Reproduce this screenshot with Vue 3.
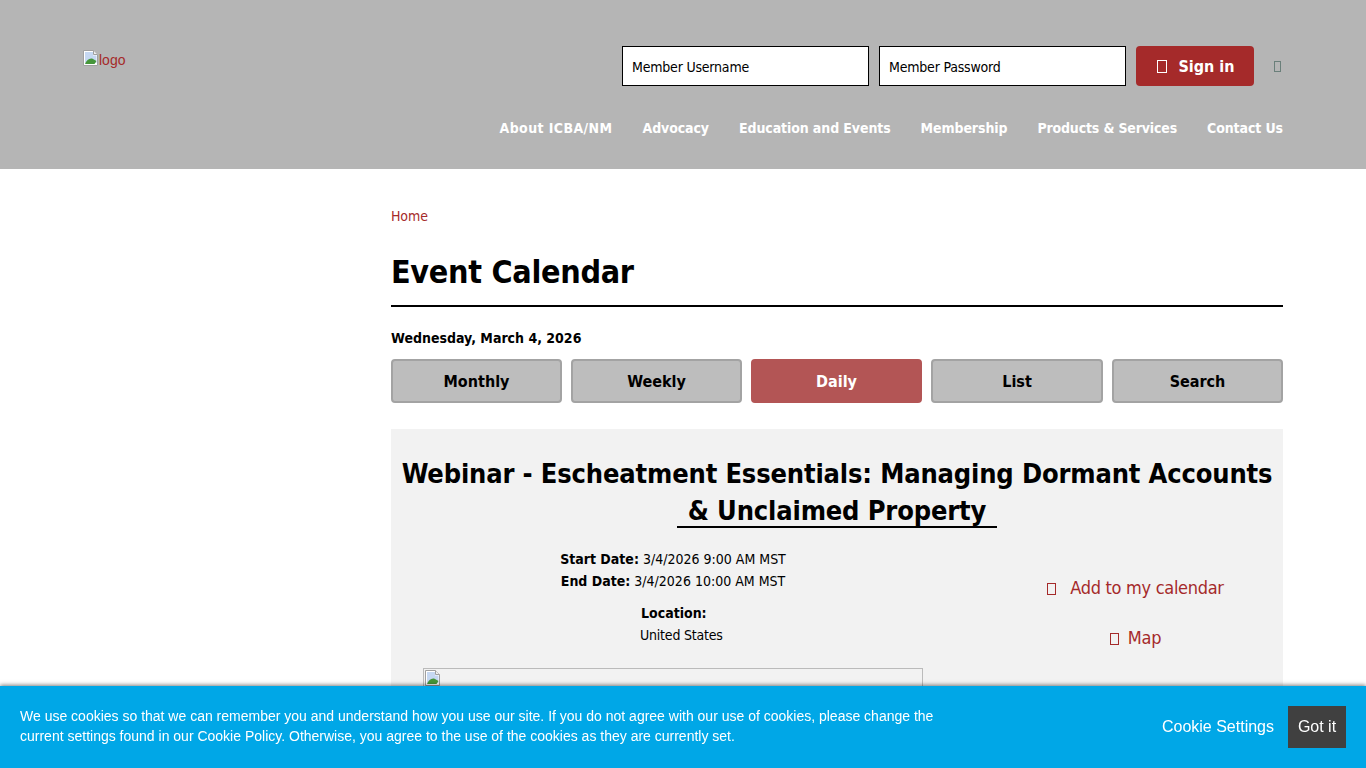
<script setup>
const nav = ['About ICBA/NM', 'Advocacy', 'Education and Events', 'Membership', 'Products & Services', 'Contact Us']
const tabs = ['Monthly', 'Weekly', 'Daily', 'List', 'Search']
</script>

<template>
  <div class="page">
    <header class="header">
      <a class="logo" href="#">
        <svg class="broken" width="16" height="16" viewBox="0 0 16 16"><path d="M.5.5h10l4 4v11H.5z" fill="#fff" stroke="#a0a0a0"/><path d="M2 2h8v3.500h3.500V13H2z" fill="#c6d8f2"/><path d="M2 14c1.500-4 5-6.500 8-5l3.500 2-2 3z" fill="#46963a"/><path d="M10.500.5v4h4" fill="#eee" stroke="#a0a0a0"/></svg>logo
      </a>
      <div class="header-right">
        <form class="login" @submit.prevent>
          <div class="field">Member Username</div>
          <div class="field">Member Password</div>
          <button class="signin"><span class="tofu tofu-w"></span>Sign in</button>
          <span class="tofu tofu-g"></span>
        </form>
        <nav class="nav">
          <a v-for="n in nav" :key="n" href="#">{{ n }}</a>
        </nav>
      </div>
    </header>

    <main class="main">
      <div class="content">
        <a class="crumb" href="#">Home</a>
        <h1 class="title">Event Calendar</h1>
        <div class="date">Wednesday, March 4, 2026</div>
        <div class="tabs">
          <a v-for="t in tabs" :key="t" href="#" class="tab" :class="{ active: t === 'Daily' }">{{ t }}</a>
        </div>
        <section class="panel">
          <h2 class="event">Webinar - Escheatment Essentials: Managing Dormant Accounts<br><span class="event-u">&amp; Unclaimed Property</span></h2>
          <div class="cols">
            <div class="info">
              <div class="dates">
                <div><b>Start Date:</b> 3/4/2026 9:00 AM MST</div>
                <div><b>End Date:</b> 3/4/2026 10:00 AM MST</div>
              </div>
              <div class="loc">
                <div class="loc-label"><b>Location:</b></div>
                <div class="loc-value">United States</div>
              </div>
              <div class="imgbox">
                <svg class="broken" width="16" height="16" viewBox="0 0 16 16"><path d="M.5.5h10l4 4v11H.5z" fill="#fff" stroke="#a0a0a0"/><path d="M2 2h8v3.500h3.500V13H2z" fill="#c6d8f2"/><path d="M2 14c1.500-4 5-6.500 8-5l3.500 2-2 3z" fill="#46963a"/><path d="M10.500.5v4h4" fill="#eee" stroke="#a0a0a0"/></svg>
              </div>
            </div>
            <div class="actions">
              <a href="#"><span class="tofu tofu-r"></span>Add to my calendar</a>
              <a href="#"><span class="tofu tofu-r small"></span>Map</a>
            </div>
          </div>
        </section>
      </div>
    </main>

    <aside class="cookie">
      <p>We use cookies so that we can remember you and understand how you use our site. If you do not agree with our use of cookies, please change the current settings found in our Cookie Policy. Otherwise, you agree to the use of the cookies as they are currently set.</p>
      <div class="cookie-actions">
        <a href="#">Cookie Settings</a>
        <button>Got it</button>
      </div>
    </aside>
  </div>
</template>

<style>
html, body { margin: 0; overflow: hidden; }
</style>

<style scoped>
.page {
  height: 768px;
  overflow: hidden;
  background: #fff;
  color: #000;
  font-family: "DejaVu Sans", Verdana, sans-serif;
  font-stretch: condensed;
  font-size: 14px;
}
a { color: #a52a2a; text-decoration: none; }
.header {
  height: 169px;
  box-sizing: border-box;
  background: #b5b5b5;
  padding: 46px 83px 0;
  display: flex;
  justify-content: space-between;
}
.logo { display: flex; align-items: flex-start; height: 24px; padding-top: 4px; line-height: 21px; font-family: "Liberation Sans", sans-serif; font-stretch: normal; }
.broken { flex: none; }
.header-right { display: flex; flex-direction: column; align-items: flex-end; }
.login { display: flex; align-items: center; margin: 0; }
.field {
  width: 247px;
  height: 40px;
  box-sizing: border-box;
  border: 1px solid #000;
  background: #fff;
  margin-right: 10px;
  padding-left: 9px;
  line-height: 40px;
  font-size: 14px;
  letter-spacing: -.2px;
}
.signin {
  width: 118px;
  height: 40px;
  margin-right: 20px;
  padding: 0 0 0 2px;
  border: 0;
  border-radius: 4px;
  background: #a52a2a;
  color: #fff;
  font: inherit;
  font-stretch: inherit;
  font-size: 16px;
  font-weight: 700;
  display: flex;
  align-items: center;
  justify-content: center;
}
.tofu { display: inline-block; box-sizing: border-box; border: 1px solid currentColor; flex: none; }
.tofu-w { width: 10px; height: 13px; margin-right: 11px; color: #fff; }
.tofu-g { width: 7px; height: 11px; color: #6a7f7a; margin-right: 2px; }
.tofu-r { width: 9px; height: 12px; margin-right: 14px; vertical-align: -1px; }
.tofu-r.small { margin-right: 9px; }
.nav { display: flex; gap: 30px; margin-top: 33px; }
.nav a { color: #fff; font-weight: 700; font-size: 14px; line-height: 18px; letter-spacing: -.1px; }
.nav a:first-child { letter-spacing: .4px; }
.nav a:nth-child(5) { letter-spacing: -.16px; }
.main { display: flex; justify-content: flex-end; padding: 0 83px 0 0; }
.content { width: 892px; }
.crumb { display: block; margin-top: 39px; line-height: 17px; font-size: 14px; letter-spacing: -.1px; }
.title {
  margin: 28px 0 0;
  padding-bottom: 13px;
  border-bottom: 2px solid #000;
  font-size: 32px;
  line-height: 39px;
  font-weight: 700;
  letter-spacing: -.3px;
}
.date { margin-top: 22px; font-weight: 700; font-size: 14px; line-height: 18px; }
.tabs { display: grid; grid-template-columns: 171px 171px 171px 172px 171px; gap: 9px; margin-top: 12px; }
.tab {
  height: 44px;
  box-sizing: border-box;
  border: 2px solid #a3a3a3;
  border-radius: 4px;
  background: #bdbdbd;
  color: #000;
  text-align: center;
  font-size: 16px;
  font-weight: 700;
  line-height: 42px;
}
.tab.active { background: #b35555; border-color: #b35555; color: #fff; }
.panel { margin-top: 26px; background: #f2f2f2; height: 340px; padding-top: 26px; box-sizing: border-box; }
.event { margin: 0; text-align: center; font-size: 27px; line-height: 37px; font-weight: 700; letter-spacing: -.15px; }
.event-u { display: inline-block; padding: 0 11px; border-bottom: 2px solid #000; line-height: 30px; }
.cols { display: flex; margin-top: 19px; }
.info { width: 564px; padding-left: 32px; box-sizing: border-box; flex: none; }
.dates { width: 500px; text-align: center; line-height: 22px; }
.loc { margin-top: 10px; padding-left: 217px; line-height: 22px; }
.loc-label { padding-left: 1px; }
.loc-value { letter-spacing: -.2px; }
.imgbox { width: 500px; height: 100px; margin-top: 22px; box-sizing: border-box; border: 1px solid #bbb; padding: 1px; }
.imgbox .broken { display: block; }
.actions { flex: 1; display: flex; flex-direction: column; align-items: center; padding-top: 28px; padding-left: 33px; gap: 26px; font-size: 18px; line-height: 24px; letter-spacing: -.3px; }
.actions a { display: block; }
.cookie {
  position: fixed;
  left: 0;
  right: 0;
  bottom: 0;
  height: 82px;
  box-sizing: border-box;
  background: #00a7e7;
  box-shadow: 0 -1px 4px rgba(0, 0, 0, .5);
  padding: 20px 20px 0;
  display: flex;
  justify-content: space-between;
  color: #fff;
  font-family: "Liberation Sans", Arial, sans-serif;
  font-stretch: normal;
}
.cookie p { margin: 0; width: 930px; line-height: 20px; font-size: 14px; }
.cookie-actions { display: flex; align-items: center; height: 42px; gap: 14px; }
.cookie-actions a { color: #fff; font-size: 16px; }
.cookie-actions button { width: 58px; height: 42px; border: 0; background: #404040; color: #fff; font: inherit; font-size: 16px; }
</style>
